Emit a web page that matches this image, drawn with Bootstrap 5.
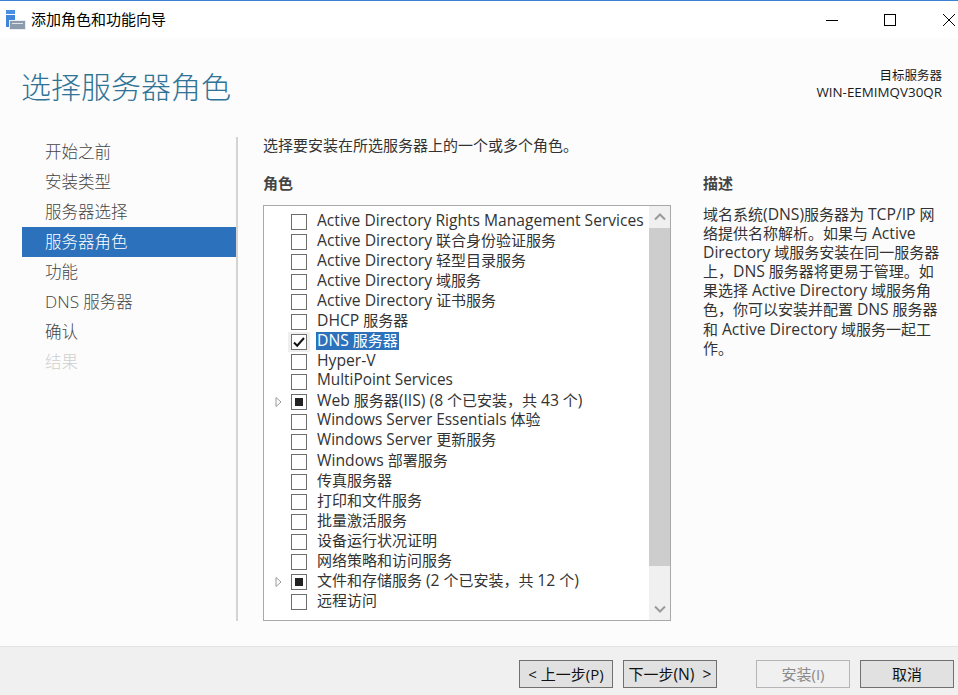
<!DOCTYPE html>
<html lang="zh-CN">
<head>
<meta charset="utf-8">
<title>添加角色和功能向导</title>
<link href="https://cdn.jsdelivr.net/npm/bootstrap@5.3.0/dist/css/bootstrap.min.css" rel="stylesheet">
<style>
html,body{height:100%;}
body{width:958px;height:695px;overflow:hidden;background:#fcfcfc;font-family:"Open Sans","Noto Sans CJK SC",sans-serif;font-size:15px;color:#222;}
.wiz-lat{font-size:1.047em;}
.wiz-lat-a{font-size:1.04em;}
.wiz-lat-b{font-size:1.025em;}
.wiz-win{height:695px;border-top:1px solid #3c82d4;}
.wiz-title{height:37px;background:#fff;font-size:15px;color:#000;}
.wiz-ico{margin-left:6px;margin-right:5px;}
.wiz-ctrl{width:16px;height:16px;display:block;}
.wiz-ctrlbox{width:58px;}
.wiz-ctrlclose{width:18px;margin-left:21px;}
.wiz-head{height:99px;padding:0 16px 0 21px;}
.wiz-h1{font-size:30px;color:#2f7396;line-height:40px;margin:27px 0 0;font-family:"Noto Sans CJK SC",sans-serif;font-weight:300;}
.wiz-target{font-size:12.5px;line-height:17px;text-align:right;margin-top:29px;color:#1a1a1a;}
.wiz-target .wiz-lat{font-size:13.4px;}
.wiz-body{height:509px;}
.wiz-side{width:238px;height:484px;padding-left:22px;border-right:2px solid #d4d4d4;flex:none;}
.wiz-step{height:30px;line-height:30px;padding-left:23px;width:214px;font-size:16.5px;font-weight:300;color:#444;}
.wiz-step.on{background:#2b71bb;color:#fff;}
.wiz-step.off{color:#cfcfcf;}
.wiz-main{padding-left:25px;width:433px;flex:none;}
.wiz-intro{line-height:16px;height:38px;color:#333;font-size:15px;}
.wiz-sub{font-weight:700;font-size:15px;line-height:18px;height:31px;color:#444;margin-top:-1px;}
.wiz-listbox{width:408px;height:416px;border:1px solid #a9a9a9;background:#fff;}
.wiz-rows{padding-top:6px;width:385px;}
.wiz-row{height:20px;line-height:20px;white-space:nowrap;font-size:15px;color:#333;}
.wiz-txt{padding-bottom:5px;}
.wiz-tw{width:27px;flex:none;padding-left:11px;}
.wiz-cb{width:16px;height:16px;border:1px solid #6e6e6e;background:#fff;flex:none;margin-right:10px;}
.wiz-fill{width:8px;height:8px;background:#222;}
.wiz-sel{background:#2b71bb;color:#fff;padding:0 1px;margin-left:-1px;line-height:16px;height:18px;align-self:flex-start;}
.wiz-rowsel{background:linear-gradient(#efefef,#efefef) no-repeat 24px 0/22px 100%;}
.wiz-sb{width:21px;background:#f0f0f0;flex:none;}
.wiz-sbbtn{height:22px;}
.wiz-thumb{height:338px;background:#cdcdcd;}
.wiz-desc{padding-left:32px;width:287px;flex:none;}
.wiz-para{line-height:19.1px;margin:0;font-size:15px;color:#333;white-space:nowrap;}
.wiz-foot{height:49px;background:#f0f0f0;border-top:1px solid #e3e3e3;padding-right:4px;padding-top:13px;gap:10px;}
.wiz-btn{width:94px;height:28px;padding:0;line-height:23px;border:1px solid #707070;border-radius:0;background:#e1e1e1;color:#111;font-size:15px;}
.wiz-btn:disabled{opacity:1;background:#f0f0f0;border-color:#b5b5b5;color:#8a8a8a;}
.wiz-gap{margin-left:29px;}
</style>
</head>
<body>
<div class="wiz-win d-flex flex-column">
  <div class="wiz-title d-flex align-items-center">
    <svg class="wiz-ico" width="20" height="20" viewBox="0 0 20 20"><rect x="0" y="0" width="9" height="4" fill="#4a90e2"/><rect x="0" y="5" width="9" height="12" fill="#3f86db"/><rect x="3" y="10" width="17" height="10" fill="#e8edf2"/><rect x="4" y="11" width="15" height="8" fill="#8c9bad"/><rect x="6" y="13" width="11" height="1" fill="#dfe5ec"/></svg>
    <span>添加角色和功能向导</span>
    <div class="ms-auto d-flex align-items-center">
      <div class="wiz-ctrlbox d-flex justify-content-center"><svg class="wiz-ctrl" viewBox="0 0 16 16"><path d="M2 8.5h12" stroke="#000" fill="none"/></svg></div>
      <div class="wiz-ctrlbox d-flex justify-content-center"><svg class="wiz-ctrl" viewBox="0 0 16 16"><rect x="2.5" y="2.5" width="11" height="11" stroke="#000" fill="none"/></svg></div>
      <div class="wiz-ctrlclose d-flex justify-content-center"><svg class="wiz-ctrl" viewBox="0 0 16 16"><path d="M2 2l12 12M14 2L2 14" stroke="#000" fill="none"/></svg></div>
    </div>
  </div>
  <div class="wiz-head d-flex justify-content-between align-items-start">
    <h1 class="wiz-h1">选择服务器角色</h1>
    <div class="wiz-target"><div>目标服务器</div><div class="wiz-lat">WIN-EEMIMQV30QR</div></div>
  </div>
  <div class="wiz-body d-flex">
    <div class="wiz-side">
      <div class="wiz-step">开始之前</div>
      <div class="wiz-step">安装类型</div>
      <div class="wiz-step">服务器选择</div>
      <div class="wiz-step on">服务器角色</div>
      <div class="wiz-step">功能</div>
      <div class="wiz-step"><span class="wiz-lat">DNS</span> 服务器</div>
      <div class="wiz-step">确认</div>
      <div class="wiz-step off">结果</div>
    </div>
    <div class="wiz-main">
      <div class="wiz-intro">选择要安装在所选服务器上的一个或多个角色。</div>
      <div class="wiz-sub">角色</div>
      <div class="wiz-listbox d-flex justify-content-between">
        <div class="wiz-rows">
          <div class="wiz-row d-flex align-items-center"><span class="wiz-tw"></span><span class="wiz-cb"></span><span class="wiz-txt"><span class="wiz-lat-a">Active Directory Rights Management Services</span></span></div>
          <div class="wiz-row d-flex align-items-center"><span class="wiz-tw"></span><span class="wiz-cb"></span><span class="wiz-txt"><span class="wiz-lat">Active Directory</span> 联合身份验证服务</span></div>
          <div class="wiz-row d-flex align-items-center"><span class="wiz-tw"></span><span class="wiz-cb"></span><span class="wiz-txt"><span class="wiz-lat">Active Directory</span> 轻型目录服务</span></div>
          <div class="wiz-row d-flex align-items-center"><span class="wiz-tw"></span><span class="wiz-cb"></span><span class="wiz-txt"><span class="wiz-lat">Active Directory</span> 域服务</span></div>
          <div class="wiz-row d-flex align-items-center"><span class="wiz-tw"></span><span class="wiz-cb"></span><span class="wiz-txt"><span class="wiz-lat">Active Directory</span> 证书服务</span></div>
          <div class="wiz-row d-flex align-items-center"><span class="wiz-tw"></span><span class="wiz-cb"></span><span class="wiz-txt"><span class="wiz-lat">DHCP</span> 服务器</span></div>
          <div class="wiz-row wiz-rowsel d-flex align-items-center"><span class="wiz-tw"></span><span class="wiz-cb d-flex align-items-center justify-content-center"><svg width="12" height="12" viewBox="0 0 12 12"><path d="M1 6.5l3.2 3.2L11 2" stroke="#111" stroke-width="2" fill="none"/></svg></span><span class="wiz-sel"><span class="wiz-lat">DNS</span> 服务器</span></div>
          <div class="wiz-row d-flex align-items-center"><span class="wiz-tw"></span><span class="wiz-cb"></span><span class="wiz-txt"><span class="wiz-lat">Hyper-V</span></span></div>
          <div class="wiz-row d-flex align-items-center"><span class="wiz-tw"></span><span class="wiz-cb"></span><span class="wiz-txt"><span class="wiz-lat-b">MultiPoint Services</span></span></div>
          <div class="wiz-row d-flex align-items-center"><span class="wiz-tw"><svg class="d-block" width="7" height="10" viewBox="0 0 7 10"><path d="M1 .5l5 4.5-5 4.5z" fill="#fff" stroke="#9a9a9a"/></svg></span><span class="wiz-cb d-flex align-items-center justify-content-center"><span class="wiz-fill"></span></span><span class="wiz-txt"><span class="wiz-lat">Web</span> 服务器<span class="wiz-lat">(IIS) (8</span> 个已安装，共 <span class="wiz-lat">43</span> 个<span class="wiz-lat">)</span></span></div>
          <div class="wiz-row d-flex align-items-center"><span class="wiz-tw"></span><span class="wiz-cb"></span><span class="wiz-txt"><span class="wiz-lat-b">Windows Server Essentials</span> 体验</span></div>
          <div class="wiz-row d-flex align-items-center"><span class="wiz-tw"></span><span class="wiz-cb"></span><span class="wiz-txt"><span class="wiz-lat-b">Windows Server</span> 更新服务</span></div>
          <div class="wiz-row d-flex align-items-center"><span class="wiz-tw"></span><span class="wiz-cb"></span><span class="wiz-txt"><span class="wiz-lat">Windows</span> 部署服务</span></div>
          <div class="wiz-row d-flex align-items-center"><span class="wiz-tw"></span><span class="wiz-cb"></span><span class="wiz-txt">传真服务器</span></div>
          <div class="wiz-row d-flex align-items-center"><span class="wiz-tw"></span><span class="wiz-cb"></span><span class="wiz-txt">打印和文件服务</span></div>
          <div class="wiz-row d-flex align-items-center"><span class="wiz-tw"></span><span class="wiz-cb"></span><span class="wiz-txt">批量激活服务</span></div>
          <div class="wiz-row d-flex align-items-center"><span class="wiz-tw"></span><span class="wiz-cb"></span><span class="wiz-txt">设备运行状况证明</span></div>
          <div class="wiz-row d-flex align-items-center"><span class="wiz-tw"></span><span class="wiz-cb"></span><span class="wiz-txt">网络策略和访问服务</span></div>
          <div class="wiz-row d-flex align-items-center"><span class="wiz-tw"><svg class="d-block" width="7" height="10" viewBox="0 0 7 10"><path d="M1 .5l5 4.5-5 4.5z" fill="#fff" stroke="#9a9a9a"/></svg></span><span class="wiz-cb d-flex align-items-center justify-content-center"><span class="wiz-fill"></span></span><span class="wiz-txt">文件和存储服务 <span class="wiz-lat">(2</span> 个已安装，共 <span class="wiz-lat">12</span> 个<span class="wiz-lat">)</span></span></div>
          <div class="wiz-row d-flex align-items-center"><span class="wiz-tw"></span><span class="wiz-cb"></span><span class="wiz-txt">远程访问</span></div>
        </div>
        <div class="wiz-sb d-flex flex-column">
          <div class="wiz-sbbtn d-flex align-items-center justify-content-center"><svg width="12" height="8" viewBox="0 0 12 8"><path d="M1 6.5l5-5 5 5" stroke="#9a9a9a" stroke-width="2" fill="none"/></svg></div>
          <div class="wiz-thumb"></div>
          <div class="wiz-sbbtn mt-auto d-flex align-items-center justify-content-center"><svg width="12" height="8" viewBox="0 0 12 8"><path d="M1 1.5l5 5 5-5" stroke="#9a9a9a" stroke-width="2" fill="none"/></svg></div>
        </div>
      </div>
    </div>
    <div class="wiz-desc">
      <div class="wiz-intro"></div>
      <div class="wiz-sub">描述</div>
      <p class="wiz-para">域名系统<span class="wiz-lat">(DNS)</span>服务器为 <span class="wiz-lat">TCP/IP</span> 网<br>络提供名称解析。如果与 <span class="wiz-lat">Active</span><br><span class="wiz-lat">Directory</span> 域服务安装在同一服务器<br>上，<span class="wiz-lat">DNS</span> 服务器将更易于管理。如<br>果选择 <span class="wiz-lat">Active Directory</span> 域服务角<br>色，你可以安装并配置 <span class="wiz-lat">DNS</span> 服务器<br>和 <span class="wiz-lat">Active Directory</span> 域服务一起工<br>作。</p>
    </div>
  </div>
  <div class="wiz-foot d-flex justify-content-end">
    <button class="btn wiz-btn" type="button">&lt; 上一步(P)</button>
    <button class="btn wiz-btn" type="button">下一步<span class="wiz-lat">(N) &nbsp;&gt;</span></button>
    <button class="btn wiz-btn wiz-gap" type="button" disabled>安装(I)</button>
    <button class="btn wiz-btn" type="button">取消</button>
  </div>
</div>
<script src="https://cdn.jsdelivr.net/npm/bootstrap@5.3.0/dist/js/bootstrap.bundle.min.js"></script>
</body>
</html>
